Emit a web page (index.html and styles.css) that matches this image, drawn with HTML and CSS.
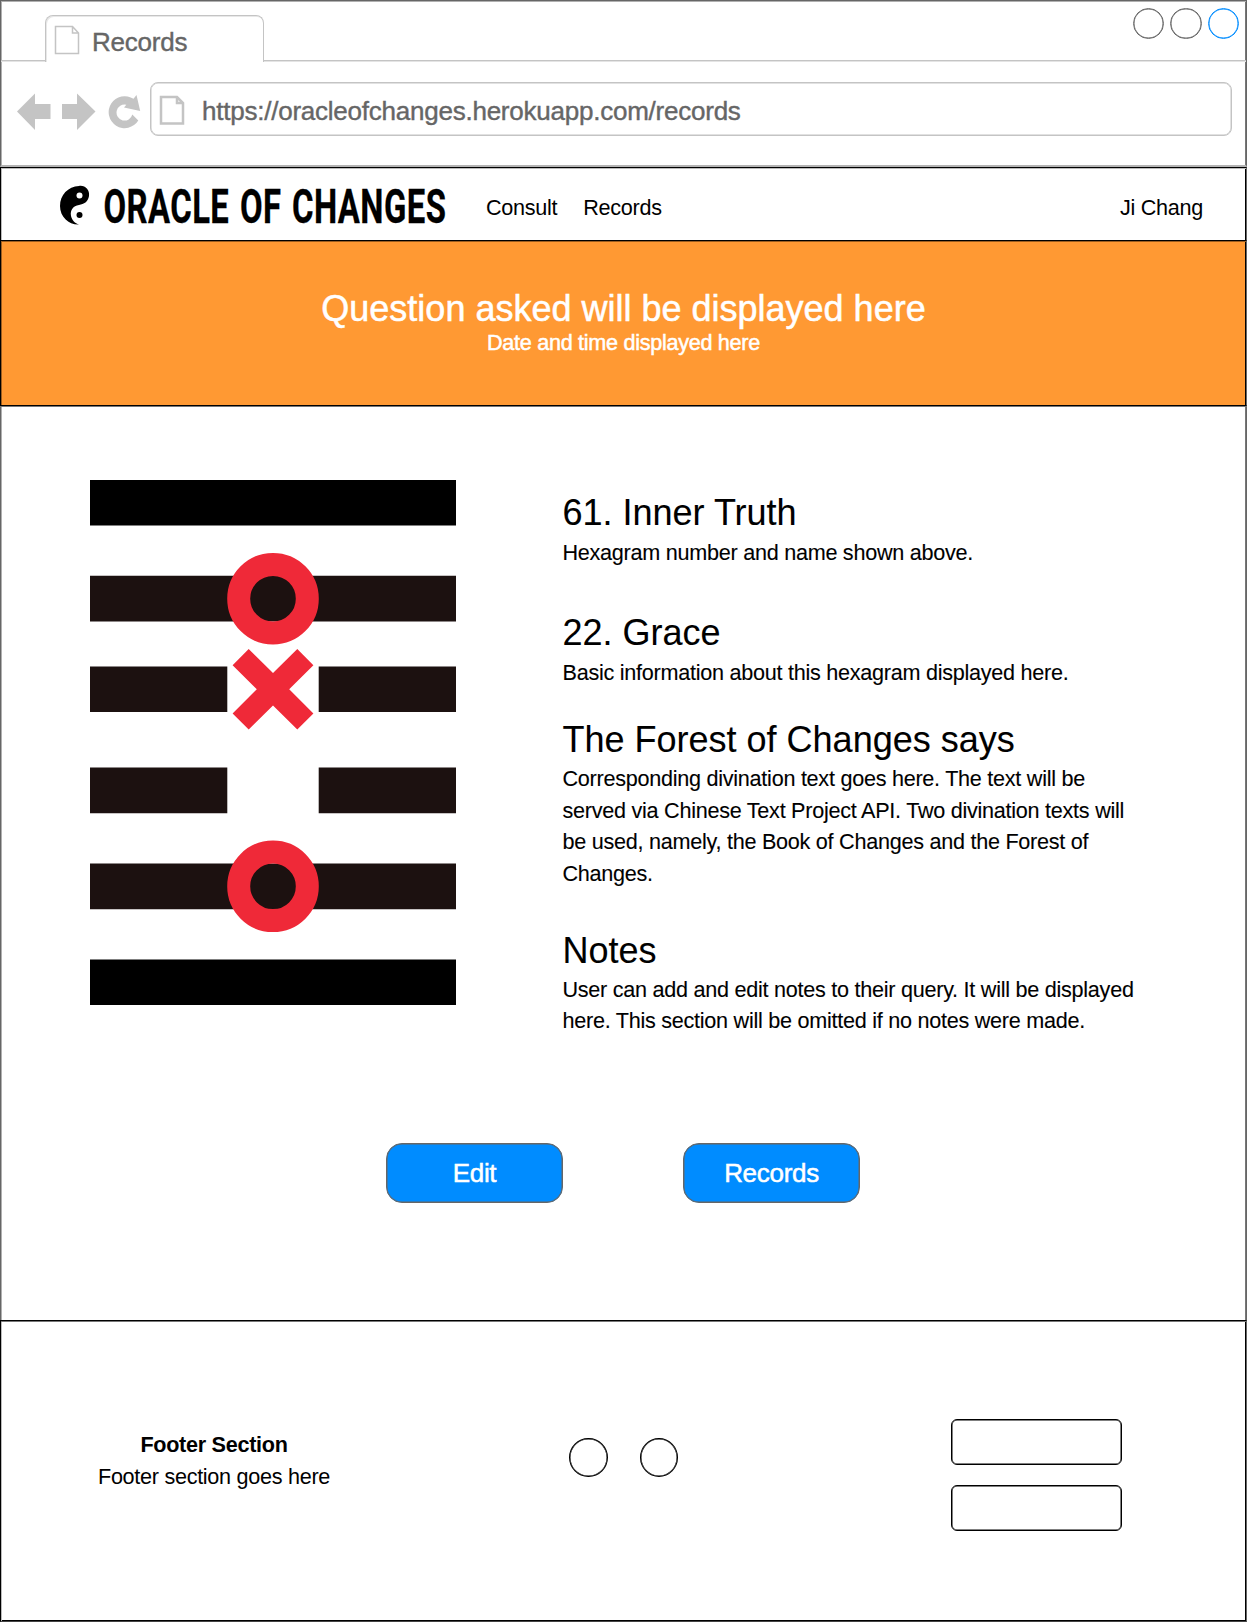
FILE: index.html
```
<!DOCTYPE html>
<html lang="en">
<head>
<meta charset="utf-8">
<title>Records</title>
<link rel="stylesheet" href="styles.css">
</head>
<body>
<div class="window">
  <div class="chrome">
    <div class="tabstrip">
      <div class="tab">
        <svg class="tab-icon" width="26" height="30" viewBox="0 0 26 30"><path d="M1.5 1.5H18.5L24.5 8V28.5H1.5ZM18.5 1.5V8H24.5" fill="none" stroke="#c4c4c4" stroke-width="1.5"/></svg>
        <span>Records</span>
      </div>
      <div class="controls"><i class="dot"></i><i class="dot"></i><i class="dot dot-active"></i></div>
    </div>
    <div class="toolbar">
      <svg class="nav-icons" width="134" height="40" viewBox="10 92 134 40" fill="#c4c4c4">
        <path d="M17 111.5L35 93.5V104H50.500V119H35V130ZM95.500 111.500L77 130V119H62V104H77V93.500Z"/>
        <path d="M136.500 95L140.200 111L124 107.500L126.300 104.800A8 8 0 1 0 132.300 114.500L138.300 120.500A16 16 0 1 1 133.500 98.800Z"/>
      </svg>
      <div class="address">
        <svg class="page-icon" width="26" height="31" viewBox="0 0 26 31"><path d="M2 2H18L24 8V28.500H2ZM18 2V8H24" fill="none" stroke="#c4c4c4" stroke-width="2.500"/></svg>
        <span>https://oracleofchanges.herokuapp.com/records</span>
      </div>
    </div>
  </div>
  <header class="header">
    <svg class="logo" width="400" height="68" viewBox="58 171 400 68">
      <path d="M79 186C85 185 90 190 89 196C88 202 84 204 79 205C73 206 70 210 71 216C72 220 75 223.500 79 224.500C69 225 60 217 60 206C60 195 68 186.500 79 186Z"/>
      <circle cx="79.500" cy="195.500" r="3" fill="#fff"/><circle cx="79.500" cy="215" r="3"/>
      <text class="logo-text" transform="translate(103.500 222.800) scale(.67 1)" textLength="511">ORACLE OF CHANGES</text>
    </svg>
    <nav class="nav"><a>Consult</a><a>Records</a></nav>
    <a class="user">Ji Chang</a>
  </header>
  <section class="hero">
    <h1>Question asked will be displayed here</h1>
    <p>Date and time displayed here</p>
  </section>
  <main class="main">
    <div class="reading">
      <svg class="hexagram" width="366" height="525" viewBox="90 480 366 525">
        <path d="M90 480H456V525.600H90ZM90 959.400H456V1005H90Z" fill="#000"/>
        <path d="M90 575.800H456V621.500H90ZM90 666.400H227.300V711.900H90ZM318.700 666.400H456V711.900H318.700ZM90 767.500H227.300V813.300H90ZM318.700 767.500H456V813.300H318.700ZM90 863.500H456V909.200H90Z" fill="#1c1110"/>
        <g fill="none" stroke="#ef2938" stroke-width="23"><circle cx="273" cy="598.700" r="34.300"/><circle cx="273" cy="886.300" r="34.300"/></g>
        <path d="M248.700 649L273 673L297.300 649L313.400 665.200L289.200 689.200L313.400 713.400L297.300 729.500L273 705.400L248.700 729.500L232.600 713.400L256.800 689.200L232.600 665.200Z" fill="#ef2938"/>
      </svg>
      <div class="details">
        <article class="first"><h2>61. Inner Truth</h2><p>Hexagram number and name shown above.</p></article>
        <article class="second"><h2>22. Grace</h2><p>Basic information about this hexagram displayed here.</p></article>
        <article class="third"><h2>The Forest of Changes says</h2><p>Corresponding divination text goes here. The text will be served via Chinese Text Project API. Two divination texts will be used, namely, the Book of Changes and the Forest of Changes.</p></article>
        <article class="notes"><h2>Notes</h2><p>User can add and edit notes to their query. It will be displayed here. This section will be omitted if no notes were made.</p></article>
      </div>
    </div>
    <div class="actions"><button>Edit</button><button>Records</button></div>
  </main>
  <footer class="footer">
    <div class="footer-text"><strong>Footer Section</strong><p>Footer section goes here</p></div>
    <div class="circles"><i></i><i></i></div>
    <div class="boxes"><i></i><i></i></div>
  </footer>
</div>
</body>
</html>
```
FILE: styles.css
```
* { box-sizing: border-box; }
body { margin: 0; background: #fff; color: #000; font: 21.6px/31.66px "Liberation Sans", Arial, sans-serif; letter-spacing: -.285px; }
h1, h2, p { margin: 0; font-weight: 400; }
svg { display: block; flex: none; }
.window { width: 1247px; height: 1622px; display: flex; flex-direction: column; }

.chrome { height: 167px; border: 1px solid #666; border-bottom: 2px solid #b3b3b3; box-shadow: inset 1px 1px #b0b0b0, inset -1px 0 #777; color: #666; font-size: 26px; letter-spacing: -.235px; -webkit-text-stroke: .4px #666; }
.tabstrip { height: 60px; display: flex; align-items: flex-start; justify-content: space-between; border-bottom: 1px solid #c4c4c4; box-shadow: 0 1px #e4e4e4; padding: 14px 7px 0 44px; }
.tab { width: 219px; height: 47px; margin-bottom: -2px; display: flex; gap: 12px; padding: 9px 0 0 8px; background: #fff; border: 1px solid #c4c4c4; border-bottom: 0; border-radius: 8px 8px 0 0; box-shadow: inset 1px 1px #e8e8e8; line-height: 34px; }
.controls { display: flex; gap: 6px; margin-top: -7.5px; }
.dot { width: 31.5px; height: 31.5px; border: 1px solid #666; border-radius: 50%; box-shadow: inset 0 0 0 .5px #666; }
.dot-active { border-color: #008cff; box-shadow: inset 0 0 0 .5px #008cff; }
.toolbar { display: flex; padding: 21px 14px 0 9px; }
.nav-icons { margin-top: 10px; }
.address { flex: 1; height: 54px; margin-left: 6px; display: flex; align-items: flex-start; gap: 17px; padding: 12px 0 0 8px; border: 1px solid #c4c4c4; border-radius: 8px; box-shadow: inset 0 0 0 .5px #c4c4c4; line-height: 32px; }

.header { height: 73px; display: flex; border: 1px solid #000; border-right-color: #666; border-bottom: 0; box-shadow: inset 0 1px #bbb, inset 1px 0 #bbb, inset -1px 0 #000; }
.logo { margin: 3px 0 0 57px; }
.logo-text { font: 700 49px Roboto, sans-serif; letter-spacing: 0; word-spacing: 3px; stroke: #000; stroke-width: .3px; }
.nav { display: flex; gap: 26px; padding: 24px 0 0 28px; }
.user { margin-left: auto; padding: 24px 43px 0 0; }

.hero { height: 166px; padding: 45px 0 0; border: 1px solid #000; border-right-color: #666; box-shadow: inset 0 1px #9c5d1f, inset 1px 0 #9c5d1f, inset -1px 0 #000, 0 1px #777; background: #ff9933; color: #fff; text-align: center; -webkit-text-stroke: .5px #fff; }
.hero h1 { font-size: 36px; line-height: 46px; letter-spacing: 0; }
.hero p { line-height: 21px; }

.main { height: 914px; border: solid #666; border-width: 0 1px; box-shadow: inset 1px 0 #b0b0b0, inset -1px 0 #777; margin-top: 1px; margin-bottom: -1px; }
.reading { display: flex; padding: 73px 0 0 89px; }
.details { width: 580px; margin: 10px 0 0 106.5px; letter-spacing: -.26px; -webkit-text-stroke: .1px #000; }
h2 { font-size: 36px; line-height: 46px; margin-bottom: 1px; letter-spacing: 0; }
.second { margin-top: 41.3px; }
.third { margin-top: 28px; }
.third h2 { margin-bottom: .4px; }
.notes { margin-top: 38px; }
.notes h2 { margin-bottom: .2px; }
.actions { display: flex; justify-content: center; gap: 120px; margin-top: 105.5px; padding-right: 2px; }
button { width: 177px; height: 60px; padding: 2px 0 0 1px; border: 1px solid #666; box-shadow: inset 0 0 0 .5px #666; border-radius: 16px; background: #008cff; color: #fff; font: 26px "Liberation Sans", Arial, sans-serif; letter-spacing: -.3px; -webkit-text-stroke: .5px #fff; }

.footer { height: 302px; display: flex; border: 1px solid #000; border-right-color: #666; border-bottom-color: #444; box-shadow: inset 0 1px #777, inset 1px 0 #bbb, inset -1px -1px #000; }
.footer-text { width: 426px; padding-top: 108px; text-align: center; }
.circles { display: flex; gap: 32px; padding: 117px 0 0 142px; }
.circles i { width: 38.5px; height: 39px; border: 1px solid #000; box-shadow: inset 0 0 0 .5px #000; border-radius: 50%; }
.boxes { margin: 98px 0 0 272.5px; display: flex; flex-direction: column; gap: 20px; }
.boxes i { width: 171px; height: 46px; border: 1px solid #000; box-shadow: inset 0 0 0 .5px #000; border-radius: 6px; }
```
